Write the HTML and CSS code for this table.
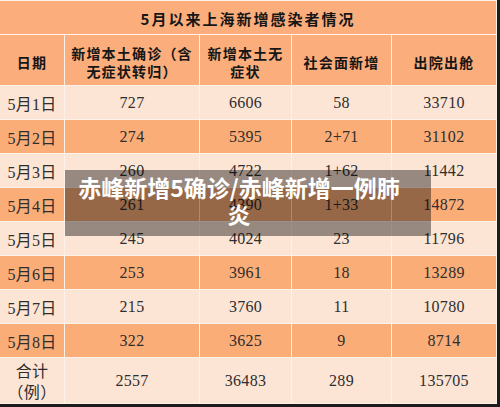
FILE: index.html
```html
<!DOCTYPE html>
<html lang="zh">
<head>
<meta charset="utf-8">
<link rel="stylesheet" href="styles.css">
</head>
<body>
<div class="stage">
  <div class="sheet">
    <div class="cell title">5月以来上海新增感染者情况</div>
    <div class="cell head">日期</div>
    <div class="cell head">新增本土确诊（含<br>无症状转归）</div>
    <div class="cell head">新增本土无<br>症状</div>
    <div class="cell head">社会面新增</div>
    <div class="cell head">出院出舱</div>

    <div class="cell light">5月1日</div><div class="cell light">727</div><div class="cell light">6606</div><div class="cell light">58</div><div class="cell light">33710</div>
    <div class="cell dark">5月2日</div><div class="cell dark">274</div><div class="cell dark">5395</div><div class="cell dark">2+71</div><div class="cell dark">31102</div>
    <div class="cell light">5月3日</div><div class="cell light">260</div><div class="cell light">4722</div><div class="cell light">1+62</div><div class="cell light">11442</div>
    <div class="cell dark">5月4日</div><div class="cell dark">261</div><div class="cell dark">4390</div><div class="cell dark">1+33</div><div class="cell dark">14872</div>
    <div class="cell light">5月5日</div><div class="cell light">245</div><div class="cell light">4024</div><div class="cell light">23</div><div class="cell light">11796</div>
    <div class="cell dark">5月6日</div><div class="cell dark">253</div><div class="cell dark">3961</div><div class="cell dark">18</div><div class="cell dark">13289</div>
    <div class="cell light">5月7日</div><div class="cell light">215</div><div class="cell light">3760</div><div class="cell light">11</div><div class="cell light">10780</div>
    <div class="cell dark">5月8日</div><div class="cell dark">322</div><div class="cell dark">3625</div><div class="cell dark">9</div><div class="cell dark">8714</div>
    <div class="cell light total">合计<br>（例）</div><div class="cell light">2557</div><div class="cell light">36483</div><div class="cell light">289</div><div class="cell light">135705</div>
  </div>
  <div class="caption">赤峰新增5确诊/赤峰新增一例肺炎</div>
</div>
</body>
</html>
```

FILE: styles.css
```css
html, body {
  margin: 0;
  padding: 0;
  background: #1c1c1c;
}

.stage {
  position: relative;
  width: 500px;
  height: 407px;
  overflow: hidden;
  background: #1c1c1c;
}

.sheet {
  display: grid;
  grid-template-columns: 64px 134px 91px 99px 104px;
  grid-template-rows: 33px 50px repeat(8, 33px) 45px;
  gap: 1px;
  padding: 1px 1px 1px 0;
  width: 496px;
  background: #fdf1e8;
}

.cell {
  display: flex;
  align-items: center;
  justify-content: center;
  text-align: center;
  font-family: "Liberation Serif", "Noto Sans CJK SC", serif;
  font-size: 16px;
  letter-spacing: 0.3px;
  color: #2e2e2e;
}

.title {
  grid-column: 1 / -1;
  background: #fbae7c;
  font-family: "Noto Sans CJK SC", sans-serif;
  font-weight: 700;
  font-size: 15px;
  letter-spacing: 2px;
  color: #161616;
  padding-top: 2px;
}

.head {
  background: #fbae7c;
  font-family: "Noto Sans CJK SC", sans-serif;
  font-weight: 700;
  font-size: 14px;
  line-height: 18px;
  letter-spacing: 1.2px;
  color: #161616;
  padding-top: 3px;
}

.light {
  background: #fde5d6;
}

.dark {
  background: #fbad78;
}

.total {
  line-height: 21px;
  padding-top: 2px;
}

.caption {
  position: absolute;
  left: 65px;
  top: 170px;
  width: 324px;
  height: 54px;
  padding: 4px 30px 8px 12px;
  background: rgba(0, 0, 0, 0.4);
  font-family: "Noto Sans CJK SC", sans-serif;
  font-weight: 700;
  font-size: 23px;
  line-height: 27px;
  color: #ffffff;
  text-align: center;
}
```
